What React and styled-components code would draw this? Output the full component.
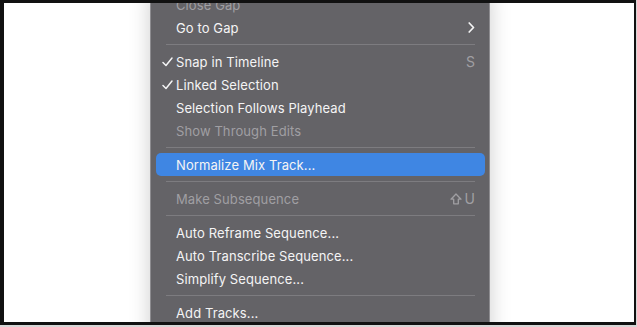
import React from 'react'
import styled, { createGlobalStyle } from 'styled-components'

const Global = createGlobalStyle`
    html, body {
        margin: 0;
        padding: 0;
        background: #d6d6d6;
    }
    * { box-sizing: border-box; }
`

const Frame = styled.div`
    width: 636px;
    height: 325px;
    border-style: solid;
    border-color: #111;
    border-width: 3px 2px 3px 4px;
    background: #fff;
    overflow: hidden;
    display: flex;
    padding-left: 146px;
`

const Menu = styled.div`
    width: 340px;
    margin-top: -11px;
    align-self: flex-start;
    background: #646367;
    border: 1px solid #8d8c90;
    box-shadow: 0 0 20px rgba(0, 0, 0, 0.2);
    padding: 0 0 20px;
    display: flex;
    flex-direction: column;
    font-family: Inter, "Noto Sans", sans-serif;
    font-size: 13px;
    letter-spacing: 0.1px;
`

const Item = styled.div`
    height: 23px;
    margin: 0 4px 0 5px;
    padding: 0 10px 0 6px;
    border-radius: 5px;
    display: grid;
    grid-template-columns: 14px 1fr auto;
    align-items: center;
    color: ${p => (p.$disabled ? '#a09fa3' : '#f4f4f5')};
    background: ${p => (p.$active ? '#3f86e3' : 'transparent')};
`

const Label = styled.span`
    white-space: nowrap;
`

const Check = styled.span`
    display: flex;
    align-items: center;
`

const Shortcut = styled.span`
    display: flex;
    align-items: center;
    gap: 2px;
    color: #a09fa3;
    font-size: 14px;
`

const Separator = styled.div`
    height: 11px;
    display: flex;
    align-items: center;
    padding: 0 14px 0 15px;
    &::after {
        content: '';
        flex: 1;
        height: 1px;
        background: #7d7c80;
    }
`

const CheckIcon = () => (
    <svg width="11" height="10" viewBox="0 0 11 10">
        <polyline points="1,5.5 4,8.5 10,1" fill="none" stroke="#f4f4f5" strokeWidth="1.5" strokeLinecap="round" strokeLinejoin="round" />
    </svg>
)

const Chevron = () => (
    <svg width="7" height="11" viewBox="0 0 7 11">
        <polyline points="1.2,1 5.5,5.5 1.2,10" fill="none" stroke="#f4f4f5" strokeWidth="1.7" strokeLinecap="round" strokeLinejoin="round" />
    </svg>
)

const ShiftIcon = () => (
    <svg width="12" height="12" viewBox="0 0 12 12">
        <path d="M6 1 L11 6.2 H8.3 V10.8 H3.7 V6.2 H1 Z" fill="none" stroke="#a09fa3" strokeWidth="1.3" strokeLinejoin="round" />
    </svg>
)

const rows = [
    { label: 'Close Gap', disabled: true },
    { label: 'Go to Gap', submenu: true },
    'sep',
    { label: 'Snap in Timeline', checked: true, key: 'S' },
    { label: 'Linked Selection', checked: true },
    { label: 'Selection Follows Playhead' },
    { label: 'Show Through Edits', disabled: true },
    'sep',
    { label: 'Normalize Mix Track...', active: true },
    'sep',
    { label: 'Make Subsequence', disabled: true, key: 'U', shift: true },
    'sep',
    { label: 'Auto Reframe Sequence...' },
    { label: 'Auto Transcribe Sequence...' },
    { label: 'Simplify Sequence...' },
    'sep',
    { label: 'Add Tracks...' },
]

const App = () => {
    return (
        <>
            <Global />
            <Frame>
                <Menu>
                    {rows.map((r, i) =>
                        r === 'sep' ? (
                            <Separator key={i} />
                        ) : (
                            <Item key={i} $disabled={r.disabled} $active={r.active}>
                                <Check>{r.checked && <CheckIcon />}</Check>
                                <Label>{r.label}</Label>
                                {r.submenu && <Chevron />}
                                {r.key && (
                                    <Shortcut>
                                        {r.shift && <ShiftIcon />}
                                        {r.key}
                                    </Shortcut>
                                )}
                            </Item>
                        )
                    )}
                </Menu>
            </Frame>
        </>
    )
}

export default App
